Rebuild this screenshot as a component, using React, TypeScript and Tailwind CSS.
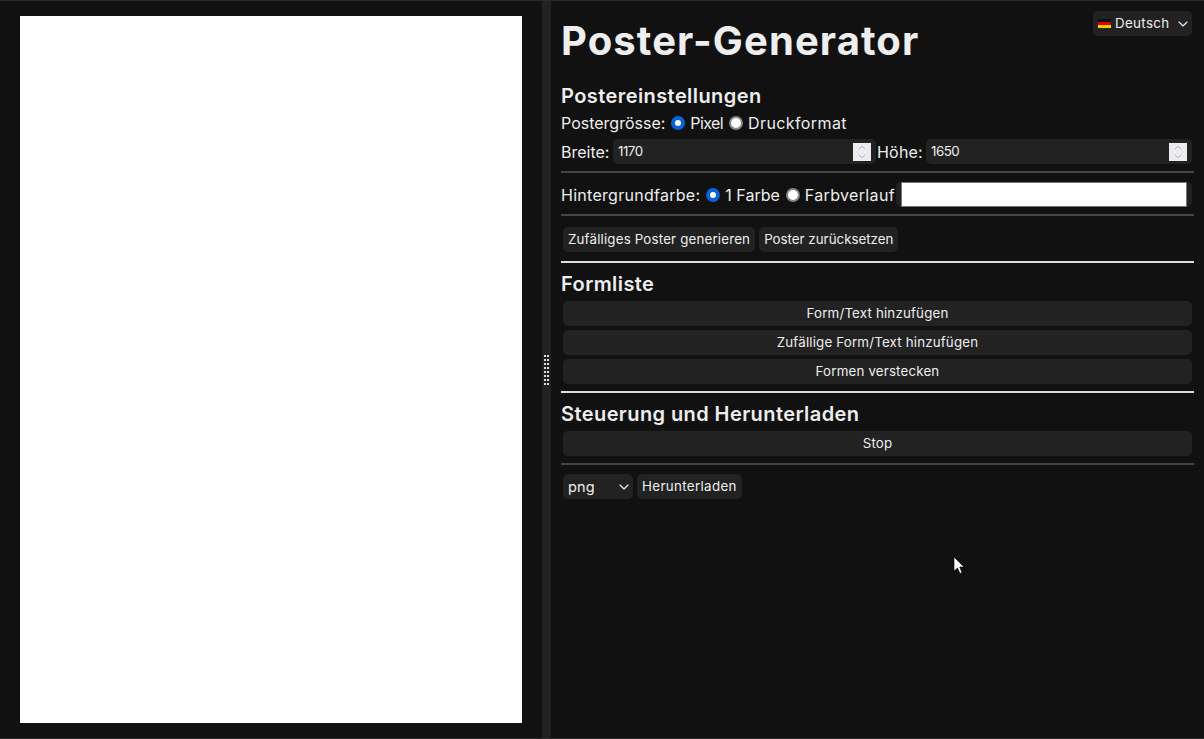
import React from 'react';
import { ChevronDown, ChevronUp } from 'lucide-react';

const BTN = 'h-[25px] rounded-[5px] bg-[#222] px-[5px] text-[13.33px] leading-[25px] text-[#eee] tracking-[0.17px] whitespace-nowrap';
const H2 = 'h-[30px] text-[20px] font-semibold leading-[30px] tracking-[0.42px]';

const Divider: React.FC<{ light?: boolean; className?: string }> = ({ light, className }) => (
  <hr className={`h-[2px] border-0 ${light ? 'bg-[#ddd]' : 'bg-[#444]'} ${className ?? ''}`} />
);

const Radio: React.FC<{ name: string; checked?: boolean; label: string; textClass?: string }> = ({ name, checked, label, textClass }) => (
  <label className="flex shrink-0 items-center whitespace-nowrap">
    <input
      type="radio"
      name={name}
      defaultChecked={checked}
      className="ml-[6px] mr-[5px] h-[14px] w-[14px] appearance-none rounded-full border-2 border-[#85858c] bg-white checked:border-4 checked:border-[#0a62d8]"
    />
    <span className={textClass}>{label}</span>
  </label>
);

const NumberField: React.FC<{ value: number; className: string }> = ({ value, className }) => (
  <div className={`flex h-[25px] items-center rounded-[5px] bg-[#222] pl-[5px] pr-[5px] ${className}`}>
    <input
      type="number"
      defaultValue={value}
      className="w-full min-w-0 bg-transparent text-[13.33px] tracking-[-0.5px] text-[#eee] outline-none [appearance:textfield] [&::-webkit-inner-spin-button]:appearance-none"
    />
    <div className="flex h-[18px] w-[18px] shrink-0 flex-col items-center justify-center bg-[#ebebf0] text-[#a3a3ae]">
      <ChevronUp size={12} strokeWidth={2} className="-my-[1px]" />
      <ChevronDown size={12} strokeWidth={2} className="-my-[1px]" />
    </div>
  </div>
);

const FullButton: React.FC<{ label: string }> = ({ label }) => (
  <button className={`${BTN} mx-[2px] block w-[629px] text-center`}>{label}</button>
);

const GermanFlag = () => (
  <svg width="13" height="9" viewBox="0 0 13 9" className="shrink-0">
    <rect width="13" height="3" fill="#111" />
    <rect y="3" width="13" height="3" fill="#d00" />
    <rect y="6" width="13" height="3" fill="#fc0" />
  </svg>
);

export default function App() {
  return (
    <div className="relative flex h-[739px] w-[1204px] overflow-hidden border-y border-[#2a2a2a] bg-[#111] font-['Inter','Liberation_Sans',sans-serif] text-[16px] text-[#eee]">
      {/* Poster preview */}
      <div className="flex w-[542px] shrink-0 pl-[20px] pt-[15px]">
        <div className="h-[707px] w-[502px] bg-white" />
      </div>

      {/* Gutter */}
      <div className="flex w-[9px] shrink-0 items-center justify-center bg-[#222]">
        <div className="grid grid-cols-2 gap-x-[1px] gap-y-[2px]">
          {Array.from({ length: 16 }).map((_, i) => (
            <div key={i} className="h-[2px] w-[2px] bg-[#ddd]" />
          ))}
        </div>
      </div>

      {/* Settings */}
      <div className="relative w-[653px] pl-[10px] pr-[10px]">
        <div className="absolute right-[12px] top-[10px] flex h-[25px] w-[99px] items-center rounded-[5px] bg-[#222] pl-[5px] pr-[1px] text-[13.33px] tracking-[0.35px]">
          <GermanFlag />
          <span className="ml-[4px]">Deutsch</span>
          <ChevronDown size={16} strokeWidth={1.75} className="ml-auto" />
        </div>

        <h1 className="mt-[15px] h-[50px] text-[40px] font-bold leading-[50px] tracking-[1.1px]">Poster-Generator</h1>

        <h2 className={`mt-[15px] ${H2}`}>Postereinstellungen</h2>
        <div className="flex h-[24px] items-center">
          <span>Postergrösse:</span>
          <Radio name="size" checked label="Pixel" textClass="tracking-[-0.6px]" />
          <Radio name="size" label="Druckformat" textClass="tracking-[0.4px]" />
        </div>
        <div className="mt-[4px] flex h-[25px] items-center">
          <span className="w-[52px]">Breite:</span>
          <NumberField value={1170} className="w-[263px]" />
          <span className="ml-[1px] w-[49px] tracking-[0.2px]">Höhe:</span>
          <NumberField value={1650} className="w-[266px]" />
        </div>
        <Divider className="mt-[7px]" />

        <div className="mt-[9px] flex h-[25px] items-center whitespace-nowrap">
          <span className="tracking-[0.28px]">Hintergrundfarbe:</span>
          <Radio name="bg" checked label="1 Farbe" />
          <Radio name="bg" label="Farbverlauf" textClass="tracking-[0.35px]" />
          <div className="ml-[1px] flex h-[25px] w-[296px] shrink-0 items-center rounded-[5px] bg-[#222] pl-[5px]">
            <div className="h-[25px] w-[286px] border border-[#767676] bg-white" />
          </div>
        </div>
        <Divider className="mt-[7px]" />

        <div className="ml-[2px] mt-[11px] flex gap-[4px]">
          <button className={BTN}>Zufälliges Poster generieren</button>
          <button className={`${BTN} tracking-[0px]`}>Poster zurücksetzen</button>
        </div>
        <Divider light className="mt-[9px]" />

        <h2 className={`mt-[6px] ${H2}`}>Formliste</h2>
        <div className="mt-[2px] flex flex-col gap-[4px]">
          <FullButton label="Form/Text hinzufügen" />
          <FullButton label="Zufällige Form/Text hinzufügen" />
          <FullButton label="Formen verstecken" />
        </div>
        <Divider light className="mt-[7px]" />

        <h2 className={`mt-[6px] ${H2}`}>Steuerung und Herunterladen</h2>
        <div className="mt-[2px]">
          <FullButton label="Stop" />
        </div>
        <Divider className="mt-[7px]" />

        <div className="ml-[2px] mt-[9px] flex gap-[4px]">
          <div className={`${BTN} flex w-[70px] items-center justify-between pr-[1px]`}>
            <span className="text-[14.5px]">png</span>
            <ChevronDown size={16} strokeWidth={1.75} />
          </div>
          <button className={`${BTN} tracking-[0.35px]`}>Herunterladen</button>
        </div>
      </div>

      {/* Mouse pointer captured in the screenshot */}
      <svg width="13" height="19" viewBox="0 0 13 19" className="absolute left-[953px] top-[555px]">
        <path d="M1 1 V15 L4.5 12 L7 17.5 L9 16.5 L6.7 11 L11 11 Z" fill="#fff" stroke="#000" strokeWidth="0.6" />
      </svg>
    </div>
  );
}
